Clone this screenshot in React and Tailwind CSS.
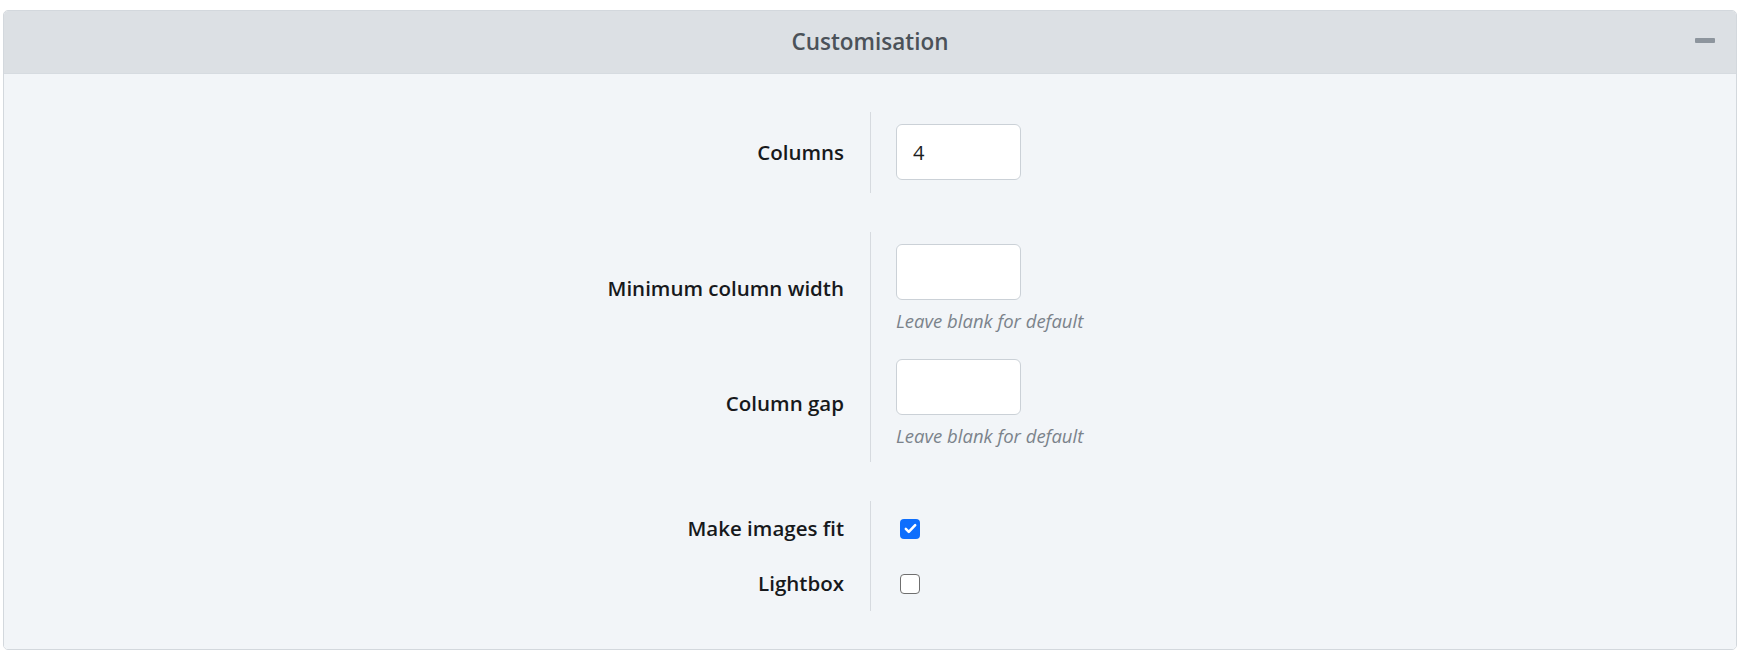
import React, { useState } from 'react';

const font = { fontFamily: '"Open Sans", "Noto Sans", sans-serif' };

function Row({ label, children, pad = 'py-3' }) {
    return (
        <div className="grid grid-cols-2">
            <div className={`flex items-center justify-end pr-[26px] text-right text-[20.5px] font-semibold text-[#17191c] ${pad}`}>
                {label}
            </div>
            <div className={`flex items-center border-l border-[#d6dadf] pl-[25px] ${pad}`}>{children}</div>
        </div>
    );
}

function TextField({ value, hint }) {
    return (
        <div className="flex flex-col">
            <input
                defaultValue={value}
                className="h-14 w-[125px] rounded-[6px] border border-[#cbd1d7] bg-white px-4 text-[20px] text-[#1c1e21] outline-none"
            />
            {hint && (
                <span className="mt-[9px] whitespace-nowrap text-[18.5px] leading-6 italic text-[#7b838b]">{hint}</span>
            )}
        </div>
    );
}

function Check({ checked, onChange }) {
    return (
        <button
            onClick={onChange}
            className={`ml-1 flex h-5 w-5 items-center justify-center rounded-[4px] ${checked
                ? 'bg-[#0d6efd]'
                : 'border-[1.5px] border-[#6f6f6f] bg-white'
                }`}
        >
            {checked && (
                <svg viewBox="0 0 20 20" className="h-[17px] w-[17px]" fill="none">
                    <path d="M4.5 10.5l3.5 3.5 7.5-8" stroke="white" strokeWidth="3" strokeLinecap="round" strokeLinejoin="round" />
                </svg>
            )}
        </button>
    );
}

export default function App() {
    const [fit, setFit] = useState(true);
    const [lightbox, setLightbox] = useState(false);

    return (
        <div className="min-h-screen bg-white px-[3px] pt-[10px]" style={font}>
            <div className="overflow-hidden rounded-[5px] border border-[#d3d8dd]">
                <div className="relative flex h-[63px] items-center justify-center border-b border-[#d6dbe0] bg-[#dce0e4]">
                    <span className="text-[22.5px] font-semibold text-[#4b5259]">Customisation</span>
                    <span className="absolute right-[21px] top-[27px] h-[5px] w-[20px] rounded-[1px] bg-[#8d959d]" />
                </div>

                <div className="flex flex-col gap-[39px] bg-[#f2f5f8] pb-[38px] pt-[38px]">
                    <div>
                        <Row label="Columns" pad="pt-3 pb-[13px]">
                            <TextField value="4" />
                        </Row>
                    </div>

                    <div>
                        <Row label="Minimum column width" pad="pt-3 pb-[13px]">
                            <TextField hint="Leave blank for default" />
                        </Row>
                        <Row label="Column gap" pad="pt-[13px] pb-[14px]">
                            <TextField hint="Leave blank for default" />
                        </Row>
                    </div>

                    <div>
                        <Row label="Make images fit" pad="h-[55px]">
                            <Check checked={fit} onChange={() => setFit(!fit)} />
                        </Row>
                        <Row label="Lightbox" pad="h-[55px]">
                            <Check checked={lightbox} onChange={() => setLightbox(!lightbox)} />
                        </Row>
                    </div>
                </div>
            </div>
        </div>
    );
}
